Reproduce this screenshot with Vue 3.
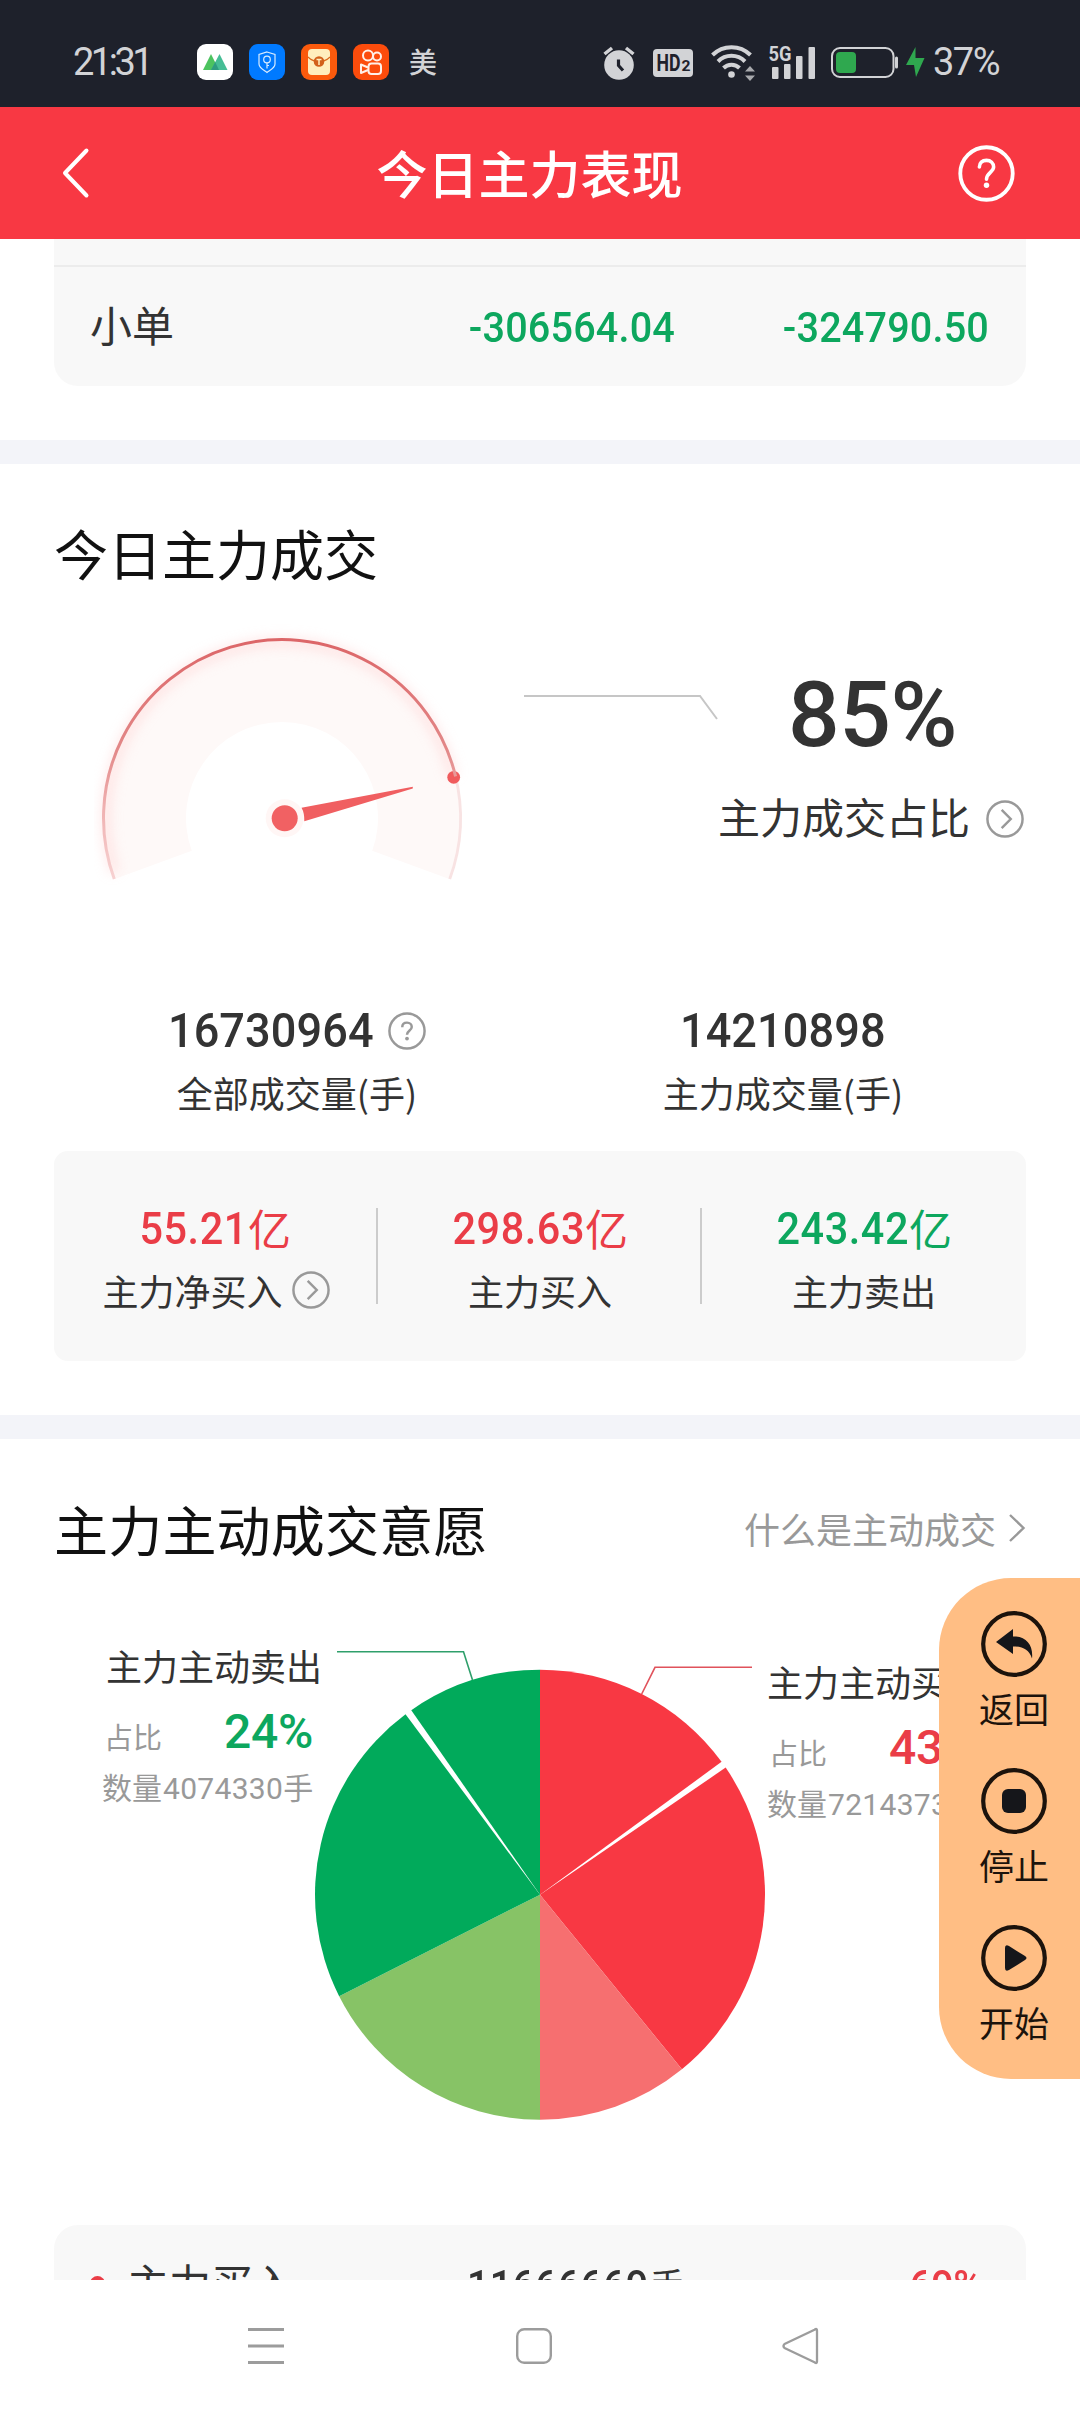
<template>
  <div class="phone">
    <div class="status-bar">
      <span class="time">21:31</span>
      <div class="app-icons">
        <svg class="app-icon" viewBox="0 0 36 36">
          <rect width="36" height="36" rx="9" fill="#fff" />
          <path d="M6 26 14 10 22 26Z" fill="#4cc35f" />
          <path d="M14 26 22.500 10 30.500 26Z" fill="#46bd95" />
          <path d="M14 26 18.200 18 22 26Z" fill="#2e9c80" />
        </svg>
        <svg class="app-icon" viewBox="0 0 36 36">
          <rect width="36" height="36" rx="9" fill="#007aff" />
          <path d="M18 8 26 10.500V20C26 24 21.500 26 18 28.500 14.500 26 10 24 10 20V10.500Z" fill="none" stroke="#d8ecff" stroke-width="1.200" />
          <circle cx="18" cy="15.500" r="3.300" fill="none" stroke="#d8ecff" stroke-width="1.200" />
          <path d="M18 19V24.500M18 21.500H20" stroke="#d8ecff" stroke-width="1.200" />
        </svg>
        <svg class="app-icon" viewBox="0 0 36 36">
          <rect width="36" height="36" rx="9" fill="#fb5a0c" />
          <rect x="7" y="5" width="22" height="26" rx="4" fill="#ffeebd" />
          <path d="M7 13C11 17 14 17.500 18 17.500S25 17 29 13" fill="none" stroke="#d9681c" stroke-width="1.200" />
          <circle cx="18" cy="17.500" r="5.300" fill="#d2601a" />
          <path d="M15.500 15.500H20.500M18 15.500V21" stroke="#ffeebd" stroke-width="1.500" />
        </svg>
        <svg class="app-icon" viewBox="0 0 36 36">
          <rect width="36" height="36" rx="9" fill="#fc4c0c" />
          <g fill="none" stroke="#fff0e8" stroke-width="2">
            <circle cx="15" cy="11.500" r="5" />
            <circle cx="24" cy="12.500" r="4" />
            <rect x="15.500" y="19.500" width="12.500" height="10.500" rx="3" />
            <path d="M15 23.500 8 20.500V29L15 26" stroke-linejoin="round" />
          </g>
        </svg>
      </div>
      <span class="app-text">美</span>
      <svg class="status-icons" viewBox="600 40 330 44">
        <g fill="#d2d3d6">
          <circle cx="619" cy="65" r="14.800" />
          <path d="M604.500 54 612 48M633.500 54 626 48" stroke="#d2d3d6" stroke-width="3.500" />
          <path d="M618.500 59.500V65.500L623 70.500" fill="none" stroke="#1e212b" stroke-width="3.200" />
          <rect x="653" y="49" width="40" height="28" rx="4" />
          <text x="656.500" y="71" class="hd-text" textLength="24" lengthAdjust="spacingAndGlyphs">HD</text>
          <text x="681.500" y="71" class="hd-sub" textLength="9" lengthAdjust="spacingAndGlyphs">2</text>
          <circle cx="731.500" cy="74.500" r="3.300" />
        </g>
        <g fill="none" stroke="#d2d3d6" stroke-width="4">
          <path d="M712.500 55A27 27 0 0 1 750.500 55" />
          <path d="M718 61.500A19 19 0 0 1 745 61.500" />
          <path d="M723.500 68A11.500 11.500 0 0 1 739.500 68" />
        </g>
        <path d="M750 66 755 71.500H745ZM750 81 755 75.500H745Z" fill="#a8a9ad" />
        <g fill="#d2d3d6">
          <text x="768.500" y="60.500" class="net-text" textLength="23" lengthAdjust="spacingAndGlyphs">5G</text>
          <rect x="772" y="67" width="6.500" height="12" rx="1" />
          <rect x="784" y="64" width="6.500" height="15" rx="1" />
          <rect x="796" y="56" width="6.500" height="23" rx="1" />
          <rect x="808.500" y="47" width="6.500" height="32" rx="1" />
        </g>
        <rect x="832" y="48" width="61.500" height="29" rx="8" fill="none" stroke="#d2d3d6" stroke-width="2" />
        <rect x="836" y="52" width="20" height="21" rx="4" fill="#2fa84f" />
        <rect x="895" y="56.500" width="3" height="12" rx="1.500" fill="#d2d3d6" />
        <path d="M915.500 47 906 65H914L916 77 924.500 58H915.500Z" fill="#2fa84f" />
      </svg>
      <span class="battery">37%</span>
    </div>

    <header class="nav-header">
      <svg class="back" viewBox="0 0 28 52"><path d="M24.500 3.500 3 26 24.500 48.500" fill="none" stroke="#fff" stroke-width="4" stroke-linecap="round" stroke-linejoin="round" /></svg>
      <h1>今日主力表现</h1>
      <svg class="help-big" viewBox="0 0 40 40">
        <circle cx="20" cy="20" r="18.400" fill="none" stroke="#fff" stroke-width="2.700" />
        <path d="M15 15.500C15 12.500 17 10.800 20 10.800S25 12.800 25 15.500C25 19 20 19.500 20 24" fill="none" stroke="#fff" stroke-width="2.500" stroke-linecap="round" />
        <circle cx="20" cy="28.300" r="1.900" fill="#fff" />
      </svg>
    </header>

    <main class="content">
      <section class="orders">
        <div class="order-row">
          <span class="order-name">小单</span>
          <span class="num green">-306564.04</span>
          <span class="num green">-324790.50</span>
        </div>
      </section>

      <section class="deal">
        <h2>今日主力成交</h2>
        <div class="gauge-row">
          <svg class="gauge" viewBox="94 620 390 280">
            <defs>
              <linearGradient id="arc" x1="0" y1="0" x2="0" y2="1">
                <stop offset="0" stop-color="#dc6668" />
                <stop offset="0.450" stop-color="#e28787" />
                <stop offset="0.700" stop-color="#efb0b0" />
                <stop offset="1" stop-color="#f7d2d2" />
              </linearGradient>
              <filter id="glow" x="-10%" y="-10%" width="120%" height="120%">
                <feGaussianBlur stdDeviation="6" />
              </filter>
            </defs>
            <path :d="ring" fill="#fef9f8" />
            <path :d="arcPath(176, -108, 76)" fill="none" stroke="#ffd0d0" stroke-width="10" opacity=".5" filter="url(#glow)" />
            <path :d="arcPath(178.5, 76, 110)" fill="none" stroke="#f8e3e3" stroke-width="2.800" />
            <circle cx="453.700" cy="777.300" r="6.400" fill="#f05b5d" />
            <path :d="arcPath(178.5, -110, 76.5)" fill="none" stroke="url(#arc)" stroke-width="3" />
            <circle cx="284.700" cy="818.300" r="19" fill="#fff6f5" />
            <circle cx="284.700" cy="818.300" r="13" fill="#f16163" />
            <path d="M301.500 807.800 412.800 786.800V788.500L304.300 821.200Q304.500 813 301.500 807.800Z" fill="#f05f61" />
          </svg>
          <svg class="leader" viewBox="0 0 196 26"><path d="M0 2H176L193 25" fill="none" stroke="#c6c6c6" stroke-width="2" /></svg>
          <div class="share">
            <span class="share-num">85%</span>
            <div class="share-label">
              <span>主力成交占比</span>
              <svg class="ring-icon" viewBox="0 0 40 40"><circle cx="20" cy="20" r="18.500" /><path d="M16.500 10.500 26 20 16.500 29.500" /></svg>
            </div>
          </div>
        </div>
        <div class="volumes">
          <div class="volume">
            <div class="volume-num">
              <span>16730964</span>
              <svg class="ring-icon" viewBox="0 0 40 40">
                <circle cx="20" cy="20" r="18.500" />
                <path d="M15 16C15 12.800 17 11.200 20 11.200S25 13.200 25 15.800C25 19.500 20 19.500 20 24" />
                <circle class="dot" cx="20" cy="28" r="2" />
              </svg>
            </div>
            <span class="label">全部成交量(手)</span>
          </div>
          <div class="volume">
            <div class="volume-num"><span>14210898</span></div>
            <span class="label">主力成交量(手)</span>
          </div>
        </div>
        <div class="amounts">
          <div v-for="item in amounts" :key="item.label" class="amount">
            <div class="amount-num" :class="item.color">
              <span class="figure">{{ item.value }}</span>
              <span class="unit">亿</span>
            </div>
            <div class="amount-label">
              <span class="label">{{ item.label }}</span>
              <svg v-if="item.more" class="ring-icon" viewBox="0 0 40 40"><circle cx="20" cy="20" r="18.500" /><path d="M16.500 10.500 26 20 16.500 29.500" /></svg>
            </div>
          </div>
        </div>
      </section>

      <section class="will">
        <div class="will-head">
          <h2>主力主动成交意愿</h2>
          <div class="what">
            <span>什么是主动成交</span>
            <svg viewBox="0 0 18 30"><path d="M2 2 15.500 15 2 28" fill="none" stroke="#999" stroke-width="2.400" /></svg>
          </div>
        </div>
        <div class="chart">
          <div v-for="side in sides" :key="side.name" class="side" :class="side.cls">
            <div class="side-name">{{ side.name }}</div>
            <div class="side-ratio">
              <span>占比</span>
              <b :class="side.color">{{ side.ratio }}</b>
            </div>
            <div class="side-count">数量<span>{{ side.count }}</span>手</div>
          </div>
          <svg class="pie" viewBox="337 1640 415 490">
            <path v-for="s in slices" :key="s.from" :d="slicePath(s.from, s.to)" :fill="s.fill" />
            <path d="M337 1651.700H463.500L472.500 1680" fill="none" stroke="#2f9f6b" stroke-width="1.600" />
            <path d="M641.700 1694 655 1667.300H752" fill="none" stroke="#e0525b" stroke-width="1.600" />
          </svg>
        </div>
        <div class="detail">
          <i class="bullet"></i>
          <span class="detail-name">主力买入</span>
          <span class="detail-num">11666669</span>
          <span class="hand">手</span>
          <span class="detail-ratio red">69%</span>
        </div>
      </section>
    </main>

    <nav class="sys-nav">
      <svg viewBox="0 0 40 40"><path d="M2 3.500H38M2 20H38M2 36.500H38" stroke="#9c9c9c" stroke-width="3" /></svg>
      <svg viewBox="0 0 40 40"><rect x="3.200" y="3.200" width="33.600" height="33.600" rx="7" fill="none" stroke="#9c9c9c" stroke-width="2.400" /></svg>
      <svg viewBox="0 0 40 40"><path d="M35 4.500V35.500Q35 38 32.500 36.300L2.500 22Q0.500 20 2.500 18L32.500 3.700Q35 2 35 4.500Z" fill="none" stroke="#9c9c9c" stroke-width="2.300" stroke-linejoin="round" /></svg>
    </nav>

    <aside class="floating">
      <div class="tool">
        <svg viewBox="0 0 66 66"><circle cx="33" cy="33" r="30.800" /><path d="M15 31 32 18V25.500C45 25 52.500 34 51 47.500 48 38.500 42 35.500 32 35.500V43Z" /></svg>
        <span>返回</span>
      </div>
      <div class="tool">
        <svg viewBox="0 0 66 66"><circle cx="33" cy="33" r="30.800" /><rect x="21" y="21" width="24" height="24" rx="6" /></svg>
        <span>停止</span>
      </div>
      <div class="tool">
        <svg viewBox="0 0 66 66"><circle cx="33" cy="33" r="30.800" /><path d="M24 23Q24 19 28 21L44 31Q47 33 44 35L28 45Q24 47 24 43Z" /></svg>
        <span>开始</span>
      </div>
    </aside>
  </div>
</template>

<script setup>
import { ref } from 'vue';

const amounts = ref([
  { value: '55.21', label: '主力净买入', color: 'red', more: true },
  { value: '298.63', label: '主力买入', color: 'red' },
  { value: '243.42', label: '主力卖出', color: 'green' },
]);

const sides = ref([
  { name: '主力主动卖出', ratio: '24%', count: '4074330', color: 'green', cls: 'sell' },
  { name: '主力主动买入', ratio: '43%', count: '7214373', color: 'red', cls: 'buy' },
]);

// angles in degrees, clockwise from 12 o'clock
const slices = [
  { from: 0, to: 53.8, fill: '#f83843' },
  { from: 55.6, to: 140.9, fill: '#f83843' },
  { from: 140.9, to: 180, fill: '#f66f70' },
  { from: 180, to: 243.2, fill: '#87c366' },
  { from: 243.2, to: 323.3, fill: '#01aa5b' },
  { from: 325.1, to: 360, fill: '#01aa5b' },
];

const point = (cx, cy, r, deg) => {
  const a = (deg * Math.PI) / 180;
  return `${(cx + r * Math.sin(a)).toFixed(2)} ${(cy - r * Math.cos(a)).toFixed(2)}`;
};

const slicePath = (from, to) =>
  `M540 1894.700L${point(540, 1894.7, 225, from)}A225 225 0 0 1 ${point(540, 1894.7, 225, to)}Z`;

// gauge arc around its own centre
const arcPath = (r, from, to) =>
  `M${point(282, 818, r, from)}A${r} ${r} 0 ${to - from > 180 ? 1 : 0} 1 ${point(282, 818, r, to)}`;

const ring =
  `${arcPath(178, -110, 110)}L${point(282, 818, 96, 110)}` +
  `A96 96 0 1 0 ${point(282, 818, 96, -110)}Z`;
</script>

<style>
body {
  margin: 0;
  background: #fff;
}
</style>

<style scoped>
.phone {
  position: relative;
  width: 1080px;
  height: 2412px;
  display: flex;
  flex-direction: column;
  overflow: hidden;
  background: #fff;
  color: #333;
  font-family: "Noto Sans CJK SC", sans-serif;
  box-sizing: border-box;
}

.phone * {
  box-sizing: border-box;
}

svg {
  display: block;
  flex: none;
}

h1,
h2 {
  margin: 0;
}

.red {
  color: #ea3d47;
}

.green {
  color: #0da75e;
}

/* condensed figures */
.num,
.volume-num span,
.figure,
.detail-num,
.detail-ratio {
  display: inline-block;
  transform: scaleX(0.92);
}

/* status bar */
.status-bar {
  height: 107px;
  flex: none;
  display: flex;
  align-items: center;
  padding: 17px 0 0 73px;
  background: #1e212b;
  color: #d2d3d6;
}

.time {
  width: 124px;
  font: 400 38px/38px Roboto, sans-serif;
  letter-spacing: -3.5px;
}

.app-icons {
  display: flex;
  gap: 16px;
}

.app-icon {
  width: 36px;
  height: 36px;
}

.app-text {
  width: 211px;
  padding: 0 0 2px 20px;
  font-size: 28px;
  line-height: 34px;
  font-weight: 500;
}

.status-icons {
  width: 330px;
  height: 44px;
}

.hd-text {
  font: 700 24px Roboto, sans-serif;
  fill: #1e212b;
}

.hd-sub {
  font: 700 15px Roboto, sans-serif;
  fill: #1e212b;
}

.net-text {
  font: 700 21px Roboto, sans-serif;
}

.battery {
  padding-left: 3px;
  font: 400 38px/38px Roboto, sans-serif;
  letter-spacing: -1.5px;
}

/* header */
.nav-header {
  height: 132px;
  flex: none;
  display: flex;
  align-items: center;
  justify-content: space-between;
  padding: 0 65px 0 62px;
  background: #f83843;
  color: #fff;
}

.back {
  width: 28px;
  height: 52px;
  margin-right: 11px;
}

.nav-header h1 {
  padding-bottom: 3px;
  font-size: 51px;
  font-weight: 500;
  line-height: 60px;
}

.help-big {
  width: 57px;
  height: 57px;
}

/* content */
.content {
  height: 2041px;
  flex: none;
  overflow: hidden;
}

.orders {
  height: 225px;
  padding: 0 54px;
  border-bottom: 24px solid #f3f4f9;
}

.order-row {
  height: 147px;
  display: grid;
  grid-template-columns: 264px 321px 314px;
  align-items: center;
  padding: 28px 36px 0;
  border-radius: 0 0 24px 24px;
  background: linear-gradient(#f8f8f8 26px, #ececec 26px, #ececec 28px, #f8f8f8 28px);
}

.order-name {
  padding-bottom: 5px;
  font-size: 42px;
  line-height: 50px;
}

.num {
  font: 500 43px/50px Roboto, sans-serif;
  letter-spacing: 0.2px;
  text-align: right;
  transform-origin: right;
}

.deal {
  height: 975px;
  padding: 56px 54px 0;
  border-bottom: 24px solid #f3f4f9;
}

h2 {
  color: #111;
  font-size: 54px;
  font-weight: 400;
  line-height: 66px;
}

.gauge-row {
  display: flex;
  height: 400px;
  padding: 34px 0 0 40px;
}

.gauge {
  width: 390px;
  height: 280px;
}

.leader {
  width: 196px;
  height: 26px;
  margin: 74px 0 0 40px;
}

.share {
  width: 306px;
  display: flex;
  flex-direction: column;
  align-items: flex-end;
  padding-top: 49px;
}

.share-num {
  padding-right: 69px;
  font: 500 91px/92px Roboto, sans-serif;
  letter-spacing: -0.5px;
}

.share-label {
  display: flex;
  align-items: center;
  gap: 16px;
  margin-top: 29px;
  padding-right: 2px;
  font-size: 42px;
  line-height: 52px;
  white-space: nowrap;
}

.share-label span {
  padding-bottom: 5px;
}

.ring-icon {
  width: 38px;
  height: 38px;
  fill: none;
  stroke: #999;
  stroke-width: 2.6px;
}

.ring-icon .dot {
  fill: #999;
  stroke: none;
}

.volumes {
  display: grid;
  grid-template-columns: 1fr 1fr;
  height: 165px;
  padding-top: 16px;
}

.volume {
  display: flex;
  flex-direction: column;
  align-items: center;
}

.volume-num {
  display: flex;
  align-items: center;
  gap: 14px;
  height: 58px;
  font: 500 49px/58px Roboto, sans-serif;
  letter-spacing: 0.1px;
}

.volume-num span {
  margin: 0 -9px;
}

.volume .label {
  margin-top: 10px;
}

.label {
  font-size: 36px;
  line-height: 44px;
}

.amounts {
  display: grid;
  grid-template-columns: repeat(3, 1fr);
  height: 210px;
  border-radius: 14px;
  background: #f8f8f8;
}

.amount {
  display: flex;
  flex-direction: column;
  align-items: center;
  padding-top: 52px;
  background: linear-gradient(#ccc, #ccc) right 57px / 2px 96px no-repeat;
}

.amount:last-child {
  background: none;
}

.amount-num {
  display: flex;
  align-items: center;
  height: 52px;
}

.figure {
  margin-left: -11px;
  font: 500 45px/52px Roboto, sans-serif;
  letter-spacing: 0.6px;
  transform-origin: right;
}

.unit {
  padding-bottom: 4px;
  font-size: 43px;
  line-height: 48px;
}

.amount-label {
  display: flex;
  align-items: center;
  gap: 9px;
  height: 44px;
  margin-top: 13px;
}

.amount-label .label {
  padding-bottom: 1px;
}

.will {
  padding: 56px 54px 0;
}

.will-head {
  display: flex;
  align-items: center;
  justify-content: space-between;
  height: 66px;
}

.will-head h2 {
  padding-top: 1px;
  letter-spacing: 0.2px;
}

.what {
  display: flex;
  align-items: center;
  gap: 12px;
  color: #999;
  font-size: 36px;
}

.what svg {
  width: 18px;
  height: 30px;
}

.chart {
  display: grid;
  grid-template-columns: 283px 415px 274px;
  height: 585px;
  margin-top: 79px;
}

.side {
  grid-row: 1;
  white-space: nowrap;
}

.sell {
  grid-column: 1;
  padding: 2px 0 0 48px;
}

.sell .side-name {
  padding-left: 4px;
}

.buy {
  grid-column: 3;
  padding: 18px 0 0 15px;
}

.pie {
  grid-column: 2;
  grid-row: 1;
  width: 415px;
  height: 490px;
  overflow: visible;
}

.side-name {
  font-size: 36px;
  line-height: 46px;
}

.side-ratio {
  display: flex;
  align-items: center;
  height: 60px;
  margin-top: 14px;
  padding-left: 2px;
  color: #999;
  font-size: 29px;
}

.side-ratio span {
  width: 120px;
  padding-top: 7px;
}

.side-ratio b {
  font: 500 48px/60px Roboto, sans-serif;
  letter-spacing: -0.3px;
}

.side-count {
  margin-top: 4px;
  color: #999;
  font-size: 30px;
  line-height: 40px;
}

.side-count span {
  padding-left: 1px;
  font-family: Roboto, sans-serif;
  letter-spacing: 0.3px;
}

.detail {
  display: flex;
  align-items: center;
  height: 119px;
  padding: 0 44px 0 36px;
  border-radius: 24px;
  background: #f8f8f8;
}

.bullet {
  width: 15px;
  height: 15px;
  margin-bottom: 3px;
  border-radius: 50%;
  background: #ea3d47;
}

.detail-name {
  width: 362px;
  padding: 0 0 5px 22px;
  font-size: 42px;
  line-height: 50px;
}

.detail-num {
  margin-right: -15px;
  font: 500 43px/50px Roboto, sans-serif;
  letter-spacing: 0.2px;
  transform-origin: left;
}

.hand {
  padding-bottom: 2px;
  font-size: 36px;
  line-height: 50px;
}

.detail-ratio {
  margin-left: auto;
  font: 500 43px/50px Roboto, sans-serif;
  letter-spacing: -0.5px;
  transform-origin: right;
}

/* system navigation */
.sys-nav {
  height: 132px;
  flex: none;
  display: flex;
  gap: 228px;
  padding: 46px 0 0 246px;
  background: #fff;
}

.sys-nav svg {
  width: 40px;
  height: 40px;
}

/* floating script toolbar, covers the page edge */
.floating {
  position: absolute;
  top: 1578px;
  right: 0;
  width: 141px;
  height: 501px;
  display: flex;
  flex-direction: column;
  align-items: center;
  gap: 23px;
  padding: 33px 0 0 9px;
  border-radius: 72px 0 0 72px;
  background: #ffbe84;
  color: #1c130c;
}

.tool {
  display: flex;
  flex-direction: column;
  align-items: center;
  height: 134px;
  font-size: 35px;
  line-height: 44px;
}

.tool svg {
  width: 66px;
  height: 66px;
  margin-bottom: 9px;
  fill: #15161a;
}

.tool circle {
  fill: none;
  stroke: #1c130c;
  stroke-width: 4.2px;
}
</style>
